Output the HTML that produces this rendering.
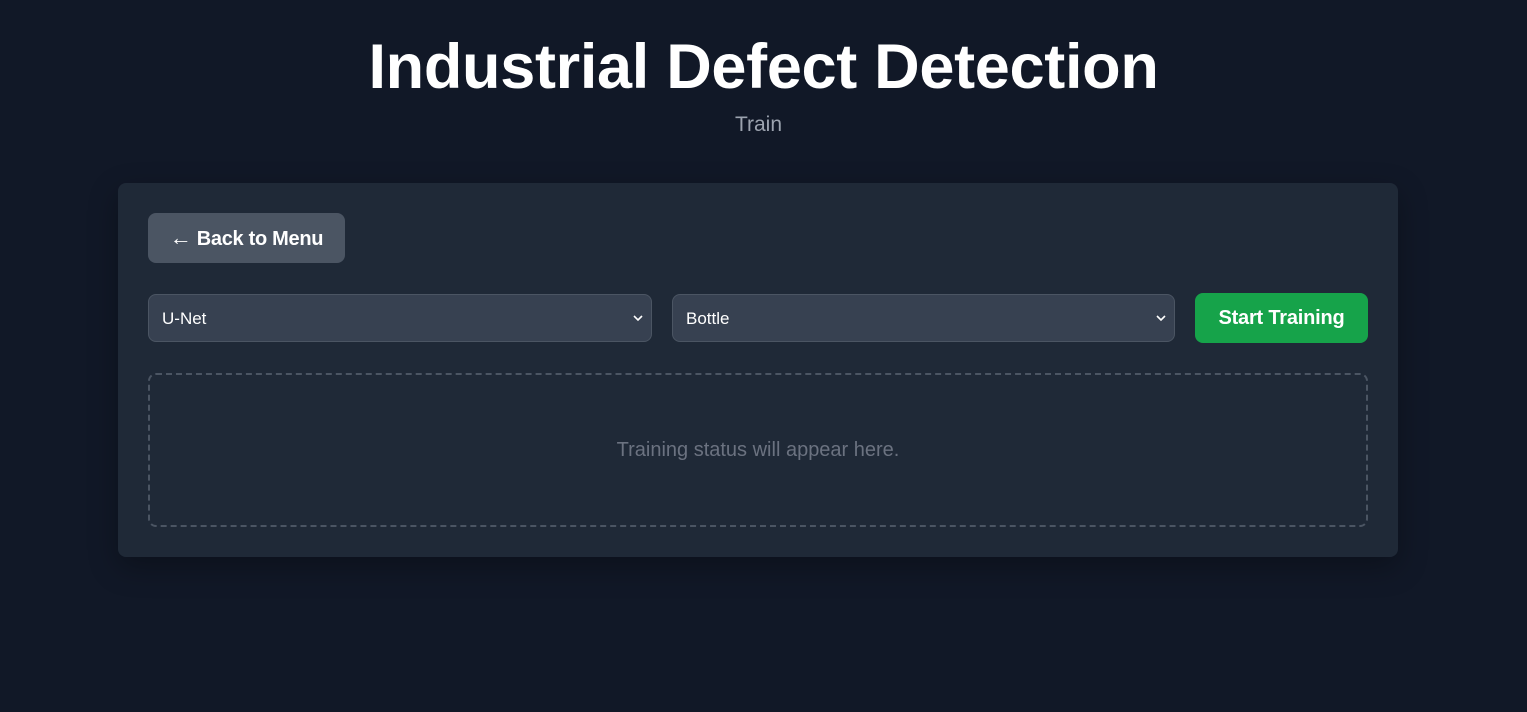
<!DOCTYPE html>
<html><head><meta charset="utf-8"><style>
*{box-sizing:border-box;margin:0;padding:0}
body{width:1527px;height:712px;background:#111827;font-family:"Liberation Sans",sans-serif;color:#fff;overflow:hidden;position:relative}
h1{position:absolute;top:31px;left:0;width:100%;text-align:center;font-size:63px;font-weight:700;letter-spacing:-0.3px}
.sub{position:absolute;top:113px;left:-5px;width:100%;text-align:center;font-size:21px;color:#9ca3af}
.card{position:absolute;left:118px;top:183px;width:1280px;height:374px;background:#1f2937;border-radius:8px;box-shadow:0 10px 30px rgba(0,0,0,.3)}
.back{position:absolute;left:30px;top:30px;width:197px;height:50px;background:#4b5563;border-radius:8px;font-weight:700;font-size:20px;line-height:50px;text-align:center;letter-spacing:-0.3px}
.back span{font-weight:400;font-size:22px}
.sel{position:absolute;top:111px;height:48px;background:#374151;border:1px solid #4b5563;border-radius:8px;font-size:17px;line-height:48px;padding-left:13px}
.sel svg{position:absolute;right:8px;top:19px}
.go{position:absolute;left:1077px;top:110px;width:173px;height:50px;background:#16a34a;border-radius:8px;font-weight:700;font-size:20px;line-height:50px;text-align:center;letter-spacing:-0.2px}
.status{position:absolute;left:30px;top:190px;width:1220px;height:154px;border:2px dashed #4b5563;border-radius:8px;text-align:center;line-height:150px;color:#6b7280;font-size:20px}
</style></head><body>
<h1>Industrial Defect Detection</h1>
<div class="sub">Train</div>
<div class="card">
<div class="back"><span>←</span> Back to Menu</div>
<div class="sel" style="left:30px;width:504px">U-Net<svg width="10" height="8" viewBox="0 0 10 8"><path d="M1 2l4 4 4-4" stroke="#fff" stroke-width="1.6" fill="none"/></svg></div>
<div class="sel" style="left:554px;width:503px">Bottle<svg width="10" height="8" viewBox="0 0 10 8"><path d="M1 2l4 4 4-4" stroke="#fff" stroke-width="1.6" fill="none"/></svg></div>
<div class="go">Start Training</div>
<div class="status">Training status will appear here.</div>
</div>
</body></html>
